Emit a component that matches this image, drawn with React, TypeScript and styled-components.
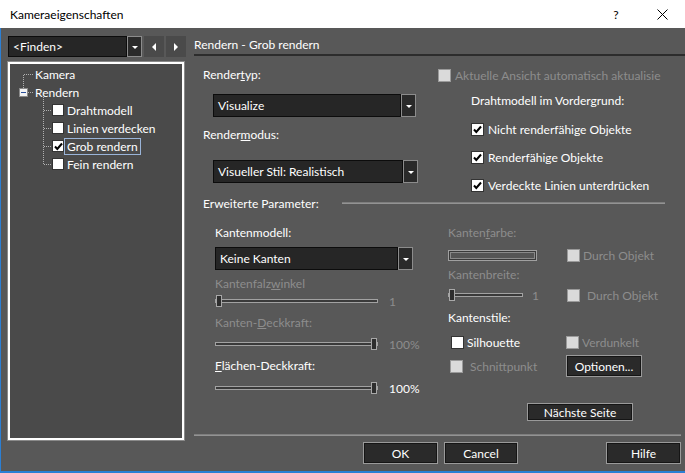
import React from 'react';
import styled, { createGlobalStyle } from 'styled-components';

const Global = createGlobalStyle`
  html, body { margin: 0; padding: 0; background: #585858; }
  body { font-family: Lato, "Noto Sans", sans-serif; font-size: 12px; color: #fff; }
  * { box-sizing: border-box; }
`;

const Window = styled.div`
  width: 685px; height: 473px; display: flex; flex-direction: column; overflow: hidden; background: #585858;
`;
const TitleBar = styled.div`
  height: 28px; flex-shrink: 0; background: #fff; color: #000; display: flex; align-items: center; padding-left: 10px;
`;
const TitleText = styled.div` flex: 1; `;
const TitleBtn = styled.div`
  width: 46px; height: 28px; display: flex; align-items: center; justify-content: center; color: #000; font-size: 12px;
`;
const Body = styled.div`
  flex: 1; display: flex; border-left: 1px solid #2b7fd4; border-bottom: 2px solid #2b7fd4; min-height: 0;
`;
const LeftCol = styled.div`
  width: 193px; flex-shrink: 0; padding: 8px 0 0 7px; display: flex; flex-direction: column;
`;
const FindRow = styled.div` display: flex; height: 21px; align-items: stretch; `;
const ComboBox = styled.div<{ $w: number; $h?: number }>`
  width: ${p => p.$w}px; height: ${p => p.$h ?? 23}px; display: flex; flex-shrink: 0;
`;
const ComboField = styled.div`
  flex: 1; background: #262626; border: 1px solid #0c0c0c; color: #fff; padding-left: 4px; display: flex; align-items: center; white-space: nowrap; overflow: hidden;
`;
const ComboBtn = styled.div`
  width: 15px; background: #2a2a2a; border: 1px solid #8c8c8c; display: flex; align-items: center; justify-content: center;
`;
const DownTri = styled.span`
  width: 0; height: 0; border-left: 3px solid transparent; border-right: 3px solid transparent; border-top: 3px solid #fff; margin-top: 1px;
`;
const NavBtn = styled.div`
  width: 20px; margin-left: 2px; background: #4a4a4a; display: flex; align-items: center; justify-content: center;
`;
const NavTri = styled.span<{ $dir: 'l' | 'r' }>`
  width: 0; height: 0; border-top: 4px solid transparent; border-bottom: 4px solid transparent;
  ${p => p.$dir === 'l' ? 'border-right: 4px solid #fff;' : 'border-left: 4px solid #fff;'}
`;
const TreePanel = styled.div`
  margin-top: 5px; width: 176px; height: 378px; border: 2px solid #fff; box-shadow: 0 0 0 1px #8a8a8a; background: #4a4a4a; position: relative; padding-top: 1px;
`;
const TreeLines = styled.svg` position: absolute; left: 0; top: 0; pointer-events: none; `;
const TreeRow = styled.div<{ $indent: number }>`
  height: 18px; display: flex; align-items: center; padding-left: ${p => p.$indent}px; position: relative;
`;
const TreeLabel = styled.span<{ $sel?: boolean }>`
  padding: 0 2px; height: 17px; line-height: 15px; border: 1px solid ${p => p.$sel ? '#9ab4d8' : 'transparent'}; white-space: nowrap;
`;
const RightCol = styled.div` flex: 1; display: flex; flex-direction: column; min-width: 0; `;
const Header = styled.div`
  height: 28px; padding-top: 9px; line-height: 16px; border-bottom: 2px solid #2c2c2c; flex-shrink: 0;
`;
const TopSection = styled.div` display: flex; height: 139px; flex-shrink: 0; `;
const TopLeft = styled.div` width: 244px; padding-left: 9px; display: flex; flex-direction: column; `;
const TopRight = styled.div` flex: 1; display: flex; flex-direction: column; `;
const Label = styled.div<{ $mt?: number; $ml?: number; $dis?: boolean }>`
  height: 16px; line-height: 16px; margin-top: ${p => p.$mt ?? 0}px; margin-left: ${p => p.$ml ?? 0}px; color: ${p => p.$dis ? '#8d8d8d' : '#fff'}; white-space: nowrap;
`;
const Spaced = styled.div<{ $mt?: number; $ml?: number }>`
  margin-top: ${p => p.$mt ?? 0}px; margin-left: ${p => p.$ml ?? 0}px;
`;
const CheckRow = styled.div<{ $mt?: number; $ml?: number; $dis?: boolean; $gap?: number; $w?: number }>`
  display: flex; align-items: center; height: 16px; margin-top: ${p => p.$mt ?? 0}px; margin-left: ${p => p.$ml ?? 0}px;
  color: ${p => p.$dis ? '#8d8d8d' : '#fff'}; white-space: nowrap; gap: ${p => p.$gap ?? 4}px;
  ${p => p.$w ? `width: ${p.$w}px; flex-shrink: 0;` : ''}
`;
const Box = styled.span<{ $dis?: boolean; $size?: number }>`
  width: ${p => p.$size ?? 13}px; height: ${p => p.$size ?? 13}px; flex-shrink: 0; display: inline-flex; align-items: center; justify-content: center;
  background: ${p => p.$dis ? '#dadada' : '#fff'}; border: 1px solid ${p => p.$dis ? '#9a9a9a' : '#333'};
`;
const AdvRow = styled.div` display: flex; align-items: center; height: 16px; padding-left: 9px; flex-shrink: 0; `;
const EtchLine = styled.div<{ $w?: number; $mr?: number }>`
  ${p => p.$w ? `width: ${p.$w}px; margin-left: auto;` : 'flex: 1;'} margin-right: ${p => p.$mr ?? 0}px; height: 2px; border-top: 1px solid #7e7e7e; border-bottom: 1px solid #939393;
`;
const LowerSection = styled.div` display: flex; flex: 1; `;
const LowerLeft = styled.div` width: 254px; padding-left: 21px; display: flex; flex-direction: column; `;
const LowerRight = styled.div` flex: 1; display: flex; flex-direction: column; `;
const SliderRow = styled.div<{ $mt?: number }>`
  display: flex; align-items: center; height: 14px; margin-top: ${p => p.$mt ?? 0}px;
`;
const Track = styled.div<{ $w: number }>`
  width: ${p => p.$w}px; height: 4px; border: 1px solid #a2a2a2; background: #3a3a3a; position: relative; flex-shrink: 0;
`;
const Thumb = styled.div<{ $right?: boolean }>`
  position: absolute; top: -5px; ${p => p.$right ? 'right: 0;' : 'left: 0;'} width: 6px; height: 12px; background: #2e2e2e; border: 1px solid #a8a8a8;
`;
const Value = styled.span<{ $dis?: boolean; $ml: number }>`
  margin-left: ${p => p.$ml}px; color: ${p => p.$dis ? '#8d8d8d' : '#fff'};
`;
const FlexRow = styled.div<{ $mt?: number; $h?: number }>`
  display: flex; align-items: center; height: ${p => p.$h ?? 16}px; margin-top: ${p => p.$mt ?? 0}px;
`;
const ColorBox = styled.div`
  width: 89px; height: 11px; border: 1px solid #a0a0a0; box-shadow: inset 0 0 0 1px #3a3a3a, inset 0 0 0 2px #8a8a8a; background: #555;
`;
const Btn = styled.div<{ $w: number; $h: number; $ml?: number; $mt?: number; $push?: boolean }>`
  width: ${p => p.$w}px; height: ${p => p.$h}px; margin-left: ${p => p.$push ? 'auto' : `${p.$ml ?? 0}px`}; margin-top: ${p => p.$mt ?? 0}px; flex-shrink: 0;
  ${p => p.$push ? 'margin-right: 4px;' : ''}
  background: #2a2a2a; border: 1px solid #9a9a9a; box-shadow: inset 0 0 0 1px #151515; display: flex; align-items: center; justify-content: center; color: #fff; white-space: nowrap;
`;
const Footer = styled.div` flex-shrink: 0; display: flex; flex-direction: column; padding-bottom: 7px; `;
const ButtonRow = styled.div` display: flex; margin-top: 6px; height: 22px; `;

const Check = ({ on }: { on?: boolean }) => on ? (
  <svg width="9" height="9" viewBox="0 0 9 9"><polyline points="1,4.5 3.3,7 8,1.5" fill="none" stroke="#000" strokeWidth="2" /></svg>
) : null;

const CB = ({ on, dis, size }: { on?: boolean; dis?: boolean; size?: number }) => (
  <Box $dis={dis} $size={size}><Check on={on} /></Box>
);

const Combo = ({ text, w, h }: { text: string; w: number; h?: number }) => (
  <ComboBox $w={w} $h={h}>
    <ComboField>{text}</ComboField>
    <ComboBtn><DownTri /></ComboBtn>
  </ComboBox>
);

const Slider = ({ w, right, value, dis, ml, mt }: { w: number; right?: boolean; value: string; dis?: boolean; ml: number; mt?: number }) => (
  <SliderRow $mt={mt}>
    <Track $w={w}><Thumb $right={right} /></Track>
    <Value $dis={dis} $ml={ml}>{value}</Value>
  </SliderRow>
);

export default function App() {
  return (
    <Window>
      <Global />
      <TitleBar>
        <TitleText>Kameraeigenschaften</TitleText>
        <TitleBtn>?</TitleBtn>
        <TitleBtn>
          <svg width="11" height="11" viewBox="0 0 11 11"><path d="M0.5 0.5 L10.5 10.5 M10.5 0.5 L0.5 10.5" stroke="#000" strokeWidth="1" /></svg>
        </TitleBtn>
      </TitleBar>
      <Body>
        <LeftCol>
          <FindRow>
            <ComboBox $w={134} $h={21}>
              <ComboField>&lt;Finden&gt;</ComboField>
              <ComboBtn><DownTri /></ComboBtn>
            </ComboBox>
            <NavBtn><NavTri $dir="l" /></NavBtn>
            <NavBtn><NavTri $dir="r" /></NavBtn>
          </FindRow>
          <TreePanel>
            <TreeLines width="172" height="120">
              <g stroke="#b0b0b0" strokeWidth="1" strokeDasharray="1 1" fill="none">
                <line x1="13.5" y1="11" x2="13.5" y2="24" />
                <line x1="14" y1="10.5" x2="23" y2="10.5" />
                <line x1="18" y1="28.5" x2="23" y2="28.5" />
                <line x1="33.5" y1="33" x2="33.5" y2="100" />
                <line x1="34" y1="46.5" x2="42" y2="46.5" />
                <line x1="34" y1="64.5" x2="42" y2="64.5" />
                <line x1="34" y1="82.5" x2="42" y2="82.5" />
                <line x1="34" y1="100.5" x2="42" y2="100.5" />
              </g>
              <rect x="9.5" y="24.5" width="8" height="8" fill="#f2f2f2" stroke="#8a8a8a" />
              <line x1="11" y1="28.5" x2="16" y2="28.5" stroke="#2a4f9a" strokeWidth="1" />
            </TreeLines>
            <TreeRow $indent={22}><TreeLabel>Kamera</TreeLabel></TreeRow>
            <TreeRow $indent={22}><TreeLabel>Rendern</TreeLabel></TreeRow>
            <TreeRow $indent={42}><CB size={12} /><TreeLabel>Drahtmodell</TreeLabel></TreeRow>
            <TreeRow $indent={42}><CB size={12} /><TreeLabel>Linien verdecken</TreeLabel></TreeRow>
            <TreeRow $indent={42}><CB size={12} on /><TreeLabel $sel>Grob rendern</TreeLabel></TreeRow>
            <TreeRow $indent={42}><CB size={12} /><TreeLabel>Fein rendern</TreeLabel></TreeRow>
          </TreePanel>
        </LeftCol>
        <RightCol>
          <Header>Rendern - Grob rendern</Header>
          <TopSection>
            <TopLeft>
              <Label $mt={11}>Render<u>t</u>yp:</Label>
              <Spaced $mt={11} $ml={10}><Combo text="Visualize" w={203} /></Spaced>
              <Label $mt={10}>Render<u>m</u>odus:</Label>
              <Spaced $mt={17} $ml={10}><Combo text="Visueller Stil: Realistisch" w={205} /></Spaced>
            </TopLeft>
            <TopRight>
              <CheckRow $mt={11} $dis><CB dis /><span>Aktuelle Ansicht automatisch aktualisie</span></CheckRow>
              <Label $mt={10} $ml={33}>Drahtmodell im Vordergrund:</Label>
              <CheckRow $mt={12} $ml={33}><CB on /><span>Nicht renderfähige Objekte</span></CheckRow>
              <CheckRow $mt={12} $ml={33}><CB on /><span>Renderfähige Objekte</span></CheckRow>
              <CheckRow $mt={12} $ml={33}><CB on /><span>Verdeckte Linien unterdrücken</span></CheckRow>
            </TopRight>
          </TopSection>
          <AdvRow>
            <span>Erweiterte Parameter:</span>
            <EtchLine $w={323} $mr={20} />
          </AdvRow>
          <LowerSection>
            <LowerLeft>
              <Label $mt={14}>Kantenmodell:</Label>
              <Spaced $mt={6}><Combo text="Keine Kanten" w={198} /></Spaced>
              <Label $mt={6} $dis>Kantenfalz<u>w</u>inkel</Label>
              <Slider w={163} value="1" dis ml={11} mt={2} />
              <Label $mt={7} $dis>Kanten-<u>D</u>eckkraft:</Label>
              <Slider w={163} right value="100%" dis ml={11} mt={6} />
              <Label $mt={7}><u>F</u>lächen-Deckkraft:</Label>
              <Slider w={163} right value="100%" ml={11} mt={7} />
            </LowerLeft>
            <LowerRight>
              <Label $mt={14} $dis>Kanten<u>f</u>arbe:</Label>
              <FlexRow $mt={6}>
                <ColorBox />
                <CheckRow $ml={30} $dis $gap={3}><CB dis /><span>Durch Objekt</span></CheckRow>
              </FlexRow>
              <Label $mt={4} $dis>Kantenbreite:</Label>
              <FlexRow $mt={5} $h={14}>
                <Slider w={75} value="1" dis ml={9} />
                <CheckRow $ml={28} $dis $gap={7}><CB dis /><span>Durch Objekt</span></CheckRow>
              </FlexRow>
              <Label $mt={8}>Kantenstile:</Label>
              <FlexRow $mt={8}>
                <CheckRow $ml={3} $gap={3} $w={115}><CB /><span>Silhouette</span></CheckRow>
                <CheckRow $dis $gap={3}><CB dis /><span>Verdunkelt</span></CheckRow>
              </FlexRow>
              <FlexRow $mt={5} $h={22}>
                <CheckRow $ml={2} $dis $gap={7} $w={116}><CB dis /><span>Schnittpunkt</span></CheckRow>
                <Btn $w={76} $h={22}>Optionen...</Btn>
              </FlexRow>
              <Btn $w={106} $h={18} $ml={79} $mt={26}>Nächste Seite</Btn>
            </LowerRight>
          </LowerSection>
          <Footer>
            <EtchLine $mr={4} />
            <ButtonRow>
              <Btn $w={75} $h={22} $ml={169}>OK</Btn>
              <Btn $w={74} $h={22} $ml={6}>Cancel</Btn>
              <Btn $w={75} $h={22} $push>Hilfe</Btn>
            </ButtonRow>
          </Footer>
        </RightCol>
      </Body>
    </Window>
  );
}
